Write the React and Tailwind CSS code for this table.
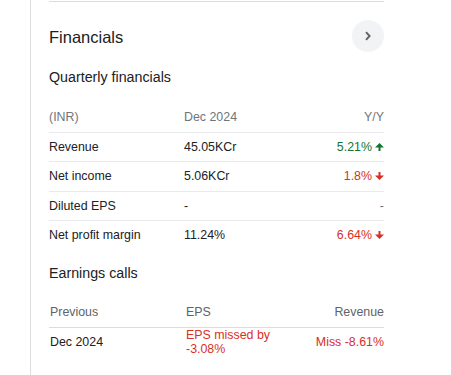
import React from "react";

const font = { fontFamily: '"Liberation Sans", Arial, sans-serif' };

function Up() {
  return (
    <svg width="9" height="8" viewBox="0 0 9 8" className="ml-[3px] shrink-0">
      <path d="M4.5 0 L9 4.5 L5.5 4.5 L5.5 8 L3.5 8 L3.5 4.5 L0 4.5 Z" fill="#137333" />
    </svg>
  );
}
function Down() {
  return (
    <svg width="9" height="8" viewBox="0 0 9 8" className="ml-[3px] shrink-0">
      <path d="M4.5 8 L9 3.5 L5.5 3.5 L5.5 0 L3.5 0 L3.5 3.5 L0 3.5 Z" fill="#d93025" />
    </svg>
  );
}

const rows = [
  { label: "Revenue", val: "45.05KCr", chg: "5.21%", dir: "up" },
  { label: "Net income", val: "5.06KCr", chg: "1.8%", dir: "down" },
  { label: "Diluted EPS", val: "-", chg: "-", dir: null },
  { label: "Net profit margin", val: "11.24%", chg: "6.64%", dir: "down" },
];

export default function App() {
  return (
    <div className="w-[451px] h-[375px] bg-white overflow-hidden text-[#202124]" style={font}>
      <div className="ml-[30px] h-full border-l border-[#dadce0] pl-[18px]">
        <div className="w-[335px]">
          <div className="pt-px">
            <div className="h-px bg-[#dadce0]" />
          </div>
          <div className="mt-[18px] h-8 flex items-center justify-between">
            <div className="text-[16.5px] leading-5 pt-px">Financials</div>
            <div className="w-8 h-8 rounded-full bg-[#f1f3f4] flex items-center justify-center">
              <svg width="8" height="10" viewBox="0 0 8 10">
                <path d="M2 1.2 L5.6 5 L2 8.8" fill="none" stroke="#5f6368" strokeWidth="1.9" />
              </svg>
            </div>
          </div>
          <div className="mt-[16px] h-5 flex items-center text-[14.25px]">Quarterly financials</div>

          <div className="mt-[13px] text-[12.4px]">
            <div className="grid grid-cols-[135px_1fr_1fr] h-[30.7px] items-center text-[#70757a] pt-[1px]">
              <div>(INR)</div>
              <div>Dec 2024</div>
              <div className="text-right">Y/Y</div>
            </div>
            {rows.map((r) => (
              <div
                key={r.label}
                className="grid grid-cols-[135px_1fr_1fr] h-[29.5px] items-center border-t border-[#e8eaed]"
              >
                <div className="text-[#202124]">{r.label}</div>
                <div className="text-[#202124]">{r.val}</div>
                <div className="flex items-center justify-end">
                  {r.dir === "up" && (
                    <>
                      <span className="text-[#137333]">{r.chg}</span>
                      <Up />
                    </>
                  )}
                  {r.dir === "down" && (
                    <>
                      <span className="text-[#d93025]">{r.chg}</span>
                      <Down />
                    </>
                  )}
                  {r.dir === null && <span className="text-[#70757a]">{r.chg}</span>}
                </div>
              </div>
            ))}
          </div>

          <div className="mt-[14px] h-5 flex items-center text-[14.25px]">Earnings calls</div>

          <div className="mt-[12px] text-[12.4px]">
            <div className="grid grid-cols-[135px_1fr_1fr] h-[31px] items-center text-[#5f6368] pt-[2px]">
              <div className="pl-px">Previous</div>
              <div className="pl-[2px]">EPS</div>
              <div className="text-right">Revenue</div>
            </div>
            <div className="grid grid-cols-[135px_1fr_1fr] h-[30px] items-center border-t border-[#dadce0]">
              <div className="pl-px text-[#202124]">Dec 2024</div>
              <div className="pl-[2px] text-[#d93025] leading-[14.3px]">EPS missed by -3.08%</div>
              <div className="text-right text-[#d93025]">Miss -8.61%</div>
            </div>
          </div>
        </div>
      </div>
    </div>
  );
}
